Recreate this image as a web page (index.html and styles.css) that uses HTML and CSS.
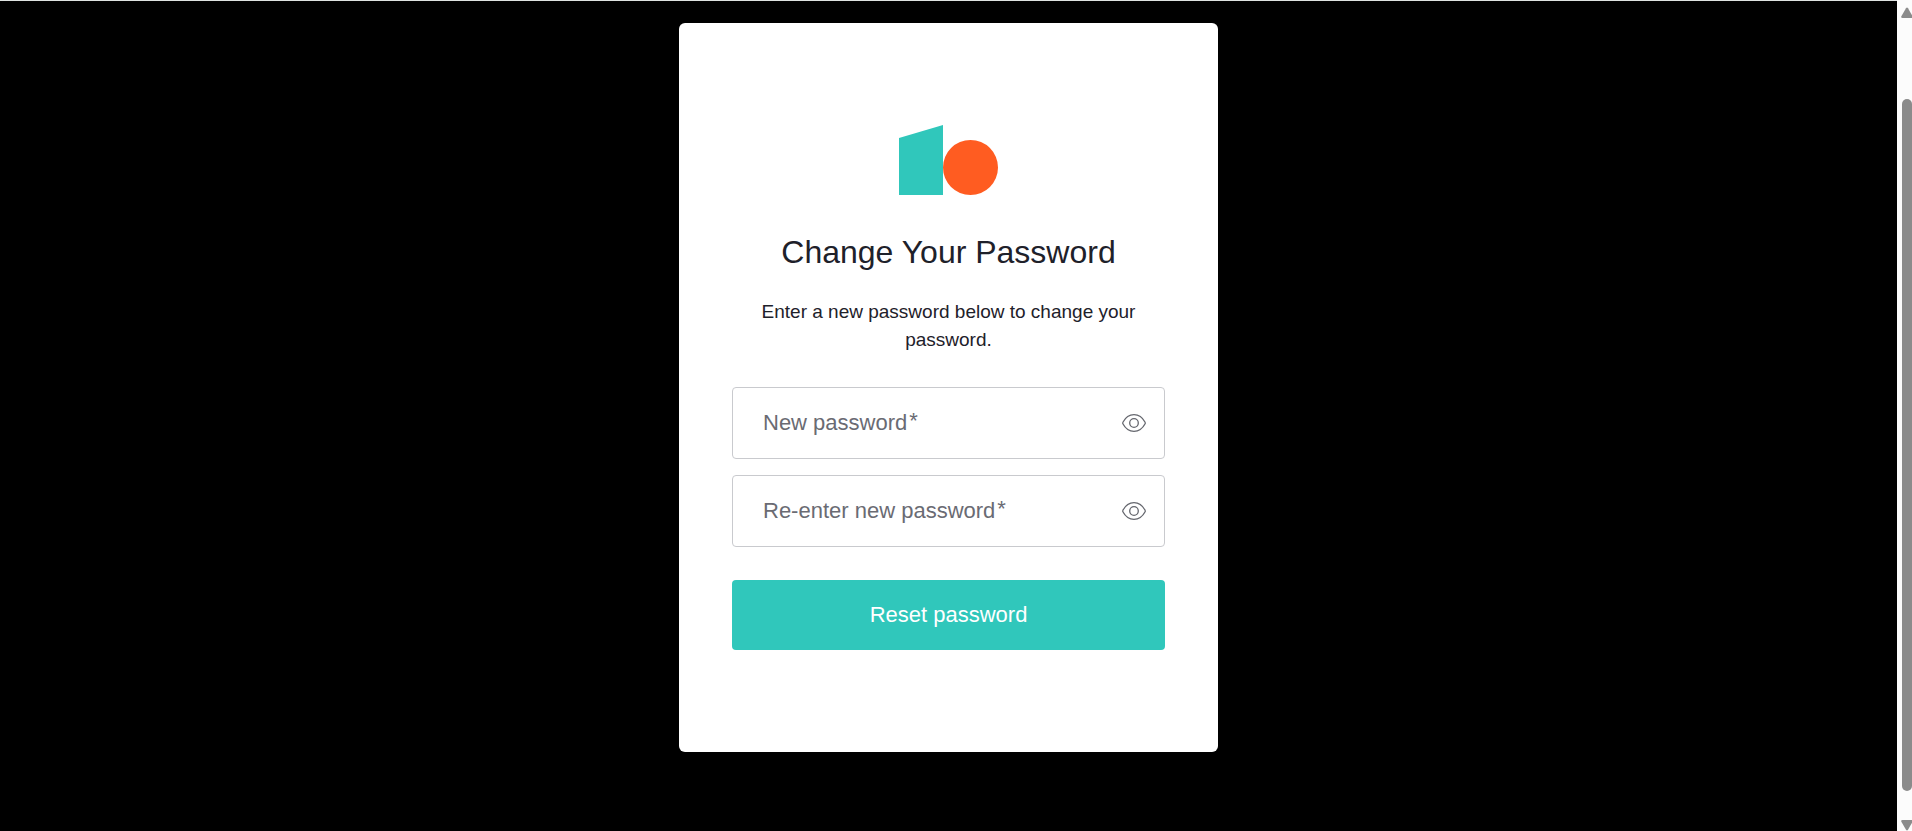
FILE: index.html
```html
<!DOCTYPE html>
<html lang="en">
<head>
<meta charset="utf-8">
<meta name="viewport" content="width=device-width, initial-scale=1">
<title>Change Your Password</title>
<link rel="stylesheet" href="styles.css">
</head>
<body>
<div class="window">
  <main class="page">
    <section class="card">
      <svg class="logo" viewBox="0 0 99 70" role="img" aria-label="Logo">
        <path fill="#30c7bb" d="M0 13 44 0V70H0z"/>
        <circle fill="#ff5c21" cx="71.5" cy="42.5" r="27.5"/>
      </svg>
      <h1 class="title">Change Your Password</h1>
      <p class="description">Enter a new password below to change your password.</p>
      <form class="form">
        <div class="field">
          <input class="field-input" type="password" id="new-password" required>
          <label class="field-label" for="new-password">New password<span class="required">*</span></label>
          <button class="reveal" type="button" aria-label="Show password">
            <svg class="eye" viewBox="0 0 24 18"><path d="M.9 9.700Q.5 9 .9 8.300C3.500 3.400 7.300.7 12 .7S20.500 3.400 23.100 8.300Q23.500 9 23.100 9.700C20.500 14.600 16.700 17.300 12 17.300S3.500 14.600 .9 9.700z"/><circle cx="12" cy="9" r="4.300"/></svg>
          </button>
        </div>
        <div class="field">
          <input class="field-input" type="password" id="confirm-password" required>
          <label class="field-label" for="confirm-password">Re-enter new password<span class="required">*</span></label>
          <button class="reveal" type="button" aria-label="Show password">
            <svg class="eye" viewBox="0 0 24 18"><path d="M.9 9.700Q.5 9 .9 8.300C3.500 3.400 7.300.7 12 .7S20.500 3.400 23.100 8.300Q23.500 9 23.100 9.700C20.500 14.600 16.700 17.300 12 17.300S3.500 14.600 .9 9.700z"/><circle cx="12" cy="9" r="4.300"/></svg>
          </button>
        </div>
        <button class="submit" type="submit">Reset password</button>
      </form>
    </section>
  </main>
  <div class="scrollbar" aria-hidden="true">
    <svg class="arrow" viewBox="0 0 12 11"><path d="M1.500 11Q-.5 11 .5 9L5 1.200Q6 0 7 1.200L11.500 9Q12.500 11 10.500 11z"/></svg>
    <div class="thumb"></div>
    <svg class="arrow" viewBox="0 0 12 11"><path d="M1.500 0Q-.5 0 .5 2L5 9.800Q6 11 7 9.800L11.500 2Q12.500 0 10.500 0z"/></svg>
  </div>
</div>
</body>
</html>
```
FILE: styles.css
```css
* {
  box-sizing: border-box;
}

body {
  margin: 0;
  background: #000;
  color: #1e212a;
  font-family: "Liberation Sans", Arial, sans-serif;
}

.window {
  display: flex;
  min-height: 100vh;
}

.page {
  flex: 1;
  display: flex;
  justify-content: center;
  align-items: flex-start;
  padding: 22px 16px;
  border-top: 1px solid #dfe3e1;
}

.card {
  display: flex;
  flex-direction: column;
  align-items: center;
  width: 100%;
  max-width: 539px;
  padding: 102px 53px;
  border-radius: 6px;
  background: #fff;
}

.logo {
  width: 99px;
  height: 70px;
}

.title {
  margin: 37px 0 0;
  font-size: 32px;
  font-weight: 400;
  line-height: 40px;
  text-align: center;
}

.description {
  margin: 26px 0 0;
  padding: 0 24px;
  font-size: 19px;
  line-height: 28px;
  text-align: center;
}

.form {
  display: flex;
  flex-direction: column;
  gap: 16px;
  width: 100%;
  margin-top: 33px;
}

.field {
  display: grid;
  grid-template-columns: 1fr 62px;
  align-items: center;
}

.field-input {
  grid-area: 1 / 1 / 2 / 3;
  width: 100%;
  height: 72px;
  padding: 0 62px 0 30px;
  border: 1px solid #c9cace;
  border-radius: 4px;
  background: #fff;
  font: inherit;
  font-size: 22px;
}

.field-label {
  grid-area: 1 / 1;
  z-index: 1;
  padding-left: 31px;
  color: #6a6b73;
  font-size: 22px;
  line-height: 28px;
  pointer-events: none;
}

.field-input:focus + .field-label,
.field-input:valid + .field-label {
  visibility: hidden;
}

.required {
  margin-left: 2px;
  line-height: 1;
  vertical-align: 2px;
}

.reveal {
  grid-area: 1 / 2;
  z-index: 1;
  display: flex;
  align-items: center;
  justify-content: center;
  height: 70px;
  padding: 0;
  border: 0;
  background: none;
}

.eye {
  width: 24px;
  height: 18px;
  fill: none;
  stroke: #65676e;
  stroke-width: 1.300;
}

.submit {
  height: 70px;
  margin-top: 17px;
  border: 0;
  border-radius: 4px;
  background: #30c7bb;
  color: #fff;
  font: inherit;
  font-size: 22px;
}

.scrollbar {
  display: flex;
  flex-direction: column;
  width: 15px;
  height: 100vh;
  padding-top: 7px;
  overflow: hidden;
  background: #fcfcfc;
}

.arrow {
  flex: none;
  width: 12px;
  height: 11px;
  margin-left: 4px;
  fill: #8b8b8b;
}

.thumb {
  flex: 1;
  width: 10px;
  margin: 81px 0 29px 5px;
  border-radius: 5px;
  background: #8b8b8b;
}
```
